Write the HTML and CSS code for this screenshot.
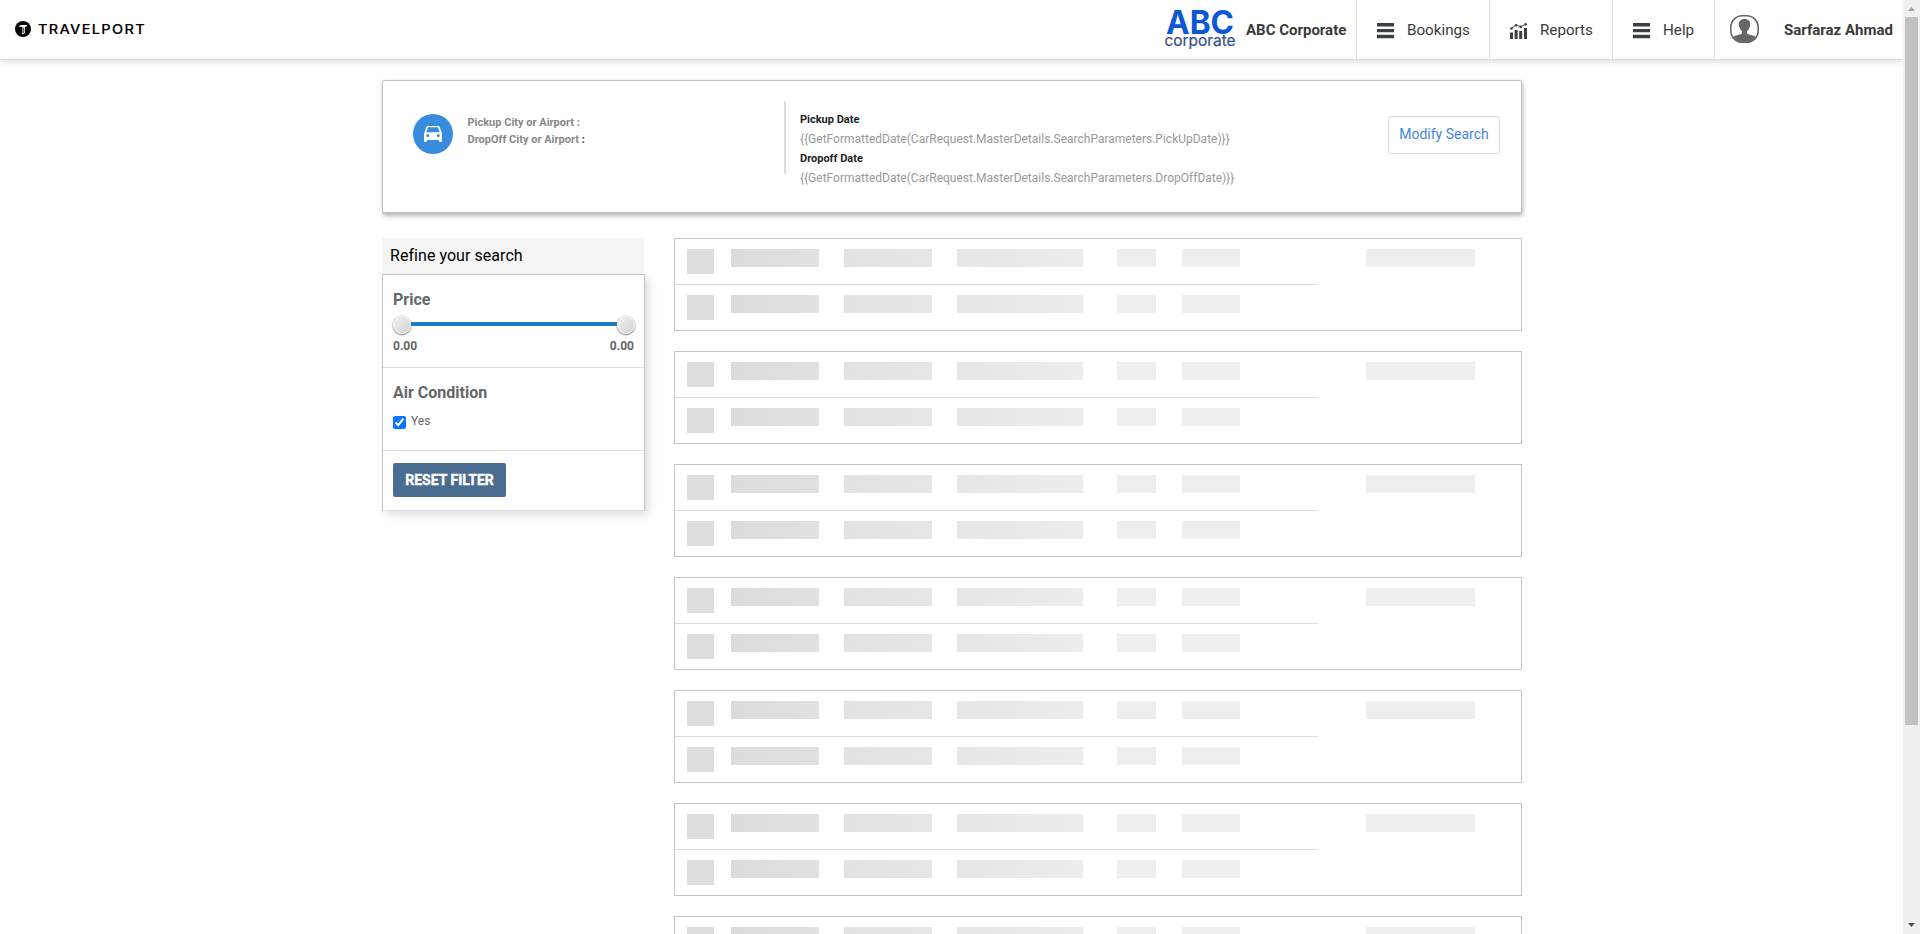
FILE: index.html
```
<!DOCTYPE html>
<html lang="en">
<head>
<meta charset="utf-8">
<title>Travelport - Car search</title>
<link rel="stylesheet" href="styles.css">
</head>
<body>
<div class="page">
  <header class="topbar">
    <div class="brand">
      <svg class="brand-mark" viewBox="0 0 16 16"><circle cx="8" cy="8" r="8" fill="#000"/><path d="M3.800 5.800Q4.500 4 6 4H12.300Q11.900 5.900 9.900 6L9.700 12.400L7.200 13.300V5.800Z" fill="#fff"/><path d="M8.200 6.500V12" stroke="#000" stroke-width=".9"/></svg>
      <svg class="brand-name" viewBox="0 0 108 18"><text x="0" y="13" textLength="108" lengthAdjust="spacingAndGlyphs">TRAVELPORT</text></svg>
    </div>
    <div class="agency">
      <svg class="agency-logo" viewBox="0 0 72 59"><text class="logo-abc" x="1" y="34" textLength="68" lengthAdjust="spacingAndGlyphs">ABC</text><text class="logo-corp" x="-.5" y="46" textLength="71" lengthAdjust="spacingAndGlyphs">corporate</text></svg>
      <span class="agency-name">ABC Corporate</span>
    </div>
    <nav class="menu">
      <a class="menu-item bookings"><svg class="icon" viewBox="0 0 17 16"><path d="M0 0h17v3.400H0zM0 5.900h17v3.400H0zM0 11.800h17v3.400H0z"/></svg><span>Bookings</span></a>
      <a class="menu-item reports"><svg class="icon" viewBox="0 0 17 17"><path d="M0 9.500h3v6.500h-3zM4.600 7h3v9h-3zM9.200 8h3v8h-3zM14 5h3v11h-3z"/><path d="M1.300 5.500L6 2L10.700 3.700L15.700 1.200" fill="none" stroke="#3a4145" stroke-width=".9"/><circle cx="1.400" cy="5.500" r="1.300"/><circle cx="6" cy="2.200" r="1.300"/><circle cx="10.700" cy="3.900" r="1.300"/><circle cx="15.600" cy="1.300" r="1.300"/></svg><span>Reports</span></a>
      <a class="menu-item help"><svg class="icon" viewBox="0 0 17 16"><path d="M0 0h17v3.400H0zM0 5.900h17v3.400H0zM0 11.800h17v3.400H0z"/></svg><span>Help</span></a>
      <a class="menu-item user"><svg class="avatar" viewBox="0 0 29 28"><rect x=".8" y=".8" width="27.400" height="26.400" rx="11.500" fill="#fff" stroke="#666" stroke-width="1.600"/><path d="M14.500 4C11 4 8.600 6.200 8.900 9.500C8.400 10.500 8.900 11.800 9.600 12.200C10 14 11 15.500 12 16.300V18C11 20 7 19.800 3.300 21.500Q6.500 27 14.500 27T25.700 21.500C22 19.800 18 20 17 18V16.300C18 15.500 19 14 19.400 12.200C20.100 11.800 20.600 10.500 20.100 9.500C20.400 6.200 18 4 14.500 4Z" fill="#666"/></svg><span class="user-name">Sarfaraz Ahmad</span></a>
    </nav>
  </header>

  <main class="content">
    <section class="summary">
      <div class="summary-icon"><svg viewBox="0 0 18 16"><path fill="#fff" fill-rule="evenodd" d="M4 0H14Q15.400 0 15.800 1.200L18 7.500V15Q18 16 17 16H16Q15 16 15 15V14H3V15Q3 16 2 16H1Q0 16 0 15V7.500L2.200 1.200Q2.600 0 4 0ZM4 1.300L2.300 6.200H15.700L14 1.300ZM3.700 8A1.500 1.500 0 1 0 3.700 11A1.500 1.500 0 1 0 3.700 8ZM14.300 8A1.500 1.500 0 1 0 14.300 11A1.500 1.500 0 1 0 14.300 8Z"/></svg></div>
      <div class="places">
        <p>Pickup City or Airport :</p>
        <p>DropOff City or Airport <span class="dark">:</span></p>
      </div>
      <div class="rule"></div>
      <dl class="dates">
        <dt>Pickup Date</dt>
        <dd>{{GetFormattedDate(CarRequest.MasterDetails.SearchParameters.PickUpDate)}}</dd>
        <dt>Dropoff Date</dt>
        <dd>{{GetFormattedDate(CarRequest.MasterDetails.SearchParameters.DropOffDate)}}</dd>
      </dl>
      <button class="modify">Modify Search</button>
    </section>

    <div class="columns">
      <aside class="filters">
        <h2 class="filters-title">Refine your search</h2>
        <div class="panel">
          <section class="group price">
            <h3>Price</h3>
            <div class="slider"><i class="knob"></i><i class="track"></i><i class="knob"></i></div>
            <div class="range"><span>0.00</span><span>0.00</span></div>
          </section>
          <section class="group air">
            <h3>Air Condition</h3>
            <label class="check"><input type="checkbox" checked><span>Yes</span></label>
          </section>
          <section class="group reset"><button class="reset-button">RESET FILTER</button></section>
        </div>
      </aside>
      <div class="results" id="results"></div>
    </div>
  </main>
</div>
<div class="scrollbar">
  <i class="arrow up"></i>
  <i class="thumb"></i>
  <i class="arrow down"></i>
</div>
<script src="skeleton.js"></script>
</body>
</html>
```
FILE: skeleton.js
```
// Placeholder cards shown while the car results load.
const row = '<div class="row"><i class="photo"></i><i class="tone-a"></i><i class="tone-b"></i><i class="tone-c"></i><i class="short"></i><i></i></div>';
const card = '<article class="card"><div class="rows">' + row + row + '</div><i class="total"></i></article>';
document.getElementById('results').innerHTML = card.repeat(7);
```
FILE: styles.css
```
* { box-sizing: border-box; }
body { margin: 0; height: 934px; display: flex; overflow: hidden; background: #fefefe; font-family: Roboto, sans-serif; color: #3a3a3a; }
p, h2, h3, dl, dd { margin: 0; }
button { font-family: inherit; }
svg { display: block; flex: none; }
.page { width: 1903px; height: 934px; overflow: hidden; }

.topbar { display: flex; height: 60px; background: #fff; border-bottom: 1px solid #dedede; box-shadow: 0 2px 5px rgba(0,0,0,.12); }
.brand { display: flex; align-items: flex-start; padding: 21px 0 0 15px; width: 1165px; }
.brand-mark { width: 16px; height: 16px; }
.brand-name { width: 108px; height: 18px; margin: 0 0 0 7px; }
.brand-name text { font: 500 13px Inter, sans-serif; letter-spacing: 1.2px; fill: #000; stroke: #000; stroke-width: .15; }
.agency { display: flex; width: 191px; }
.agency-logo { width: 72px; height: 59px; overflow: visible; }
.logo-abc { font: 700 32px Inter, sans-serif; fill: #0b57d5; }
.logo-corp { font: 400 15px Inter, sans-serif; fill: #344f86; stroke: #344f86; stroke-width: .2; }
.agency-name { margin-left: 9px; font-size: 15px; font-weight: 700; line-height: 60px; white-space: nowrap; }
.menu { display: flex; height: 59px; }
.menu-item { display: flex; border-left: 1px solid #e0e0e0; font-size: 15.200px; line-height: 60px; white-space: nowrap; padding-left: 20px; }
.icon { width: 17px; height: 16px; margin: 23px 13px 0 0; fill: #3a4145; }
.bookings { width: 133px; }
.reports { width: 123px; }
.reports .icon { height: 17px; }
.help { width: 102px; }
.user { width: 189px; padding-left: 15px; }
.avatar { width: 29px; height: 28px; margin: 15px 25px 0 0; }
.user-name { font-weight: 700; font-size: 15px; }

.content { width: 1140px; margin: 20px 0 0 382px; }
.summary { display: flex; height: 134px; background: #fff; border: 1px solid #c3c3c3; border-bottom-width: 2px; border-radius: 3px; box-shadow: 1px 2px 4px rgba(0,0,0,.28); padding-left: 30px; }
.summary-icon { width: 40px; height: 40px; border-radius: 50%; background: #388bdd; margin-top: 33px; padding: 12px 11px; }
.summary-icon svg { width: 18px; height: 16px; }
.places { width: 331px; padding: 33px 0 0 14.500px; font-size: 11px; font-weight: 700; line-height: 17px; color: #888; }
.dark { color: #333; }
.rule { width: 2px; height: 73px; margin-top: 20px; background: #dcdcdc; }
.dates { width: 602px; padding: 29px 0 0 14px; font-size: 12px; line-height: 19.500px; color: #999; }
.dates dt { font-size: 11px; font-weight: 700; color: #222; }
.modify { width: 112px; height: 38px; margin-top: 35px; padding: 0 0 2px; background: #fff; border: 1px solid #d5dde6; border-radius: 3px; font-size: 14px; color: #4286dc; }

.columns { display: flex; justify-content: space-between; margin-top: 24px; }
.filters { width: 263px; }
.filters-title { width: 262px; height: 36px; padding-left: 8px; background: #f5f5f5; font-size: 16px; font-weight: 400; letter-spacing: .05px; line-height: 36px; color: #000; }
.panel { height: 237px; background: #fff; border: 1px solid #c3c3c3; box-shadow: 4px 4px 8px rgba(0,0,0,.12); color: #666; }
.group { padding: 0 10px; border-bottom: 1px solid #e0e0e0; }
.group h3 { font-size: 16px; font-weight: 700; line-height: 20px; }
.price { height: 93px; padding-top: 15px; }
.slider { display: flex; align-items: center; width: 242px; height: 18px; margin-top: 6px; }
.knob { width: 18px; height: 18px; border-radius: 50%; border: 1px solid #f8f8f8; background: linear-gradient(135deg, #f3f3f3, #d0d0d0); box-shadow: 0 0 1px #777, 0 1px 2px #777; }
.track { flex: 1; height: 4px; background: #1f7cc0; margin-top: -2px; }
.range { display: flex; justify-content: space-between; width: 241px; margin-top: 4px; font-size: 12px; font-weight: 700; line-height: 17px; }
.air { height: 83px; padding-top: 15px; }
.check { display: flex; margin-top: 11px; font-size: 12px; line-height: 14px; }
.check input { width: 13px; height: 13px; margin: 2px 5px 0 0; accent-color: #0a75ff; }
.reset { height: 60px; padding-top: 12px; }
.reset-button { display: block; width: 113px; height: 34px; padding: 0 0 1px; border: 0; border-radius: 2px; background: #4b6c91; color: #fff; font-size: 14px; font-weight: 700; -webkit-text-stroke: .4px #fff; white-space: nowrap; }

.results { display: flex; flex-direction: column; gap: 20px; width: 848px; }
.card { display: flex; height: 93px; background: #fff; border: 1px solid #c5c5c5; }
.rows { width: 643px; height: 91px; }
.row { display: grid; grid-template-columns: 44px 113px 113px 160px 65px 58px; height: 46px; padding: 10px 0 0 12px; }
.row:first-child { border-bottom: 1px solid #dcdbe3; }
.row i { height: 18px; background: #eee; }
.row .photo { width: 27px; height: 25px; background: #dedede; }
.row .tone-a { width: 88px; background: linear-gradient(90deg, #dcdcdc, #e1e1e1); }
.row .tone-b { width: 88px; background: linear-gradient(90deg, #e2e2e2, #e6e6e6); }
.row .tone-c { width: 126px; background: linear-gradient(90deg, #e6e6e6, #ededed); }
.row .short { width: 39px; }
.total { width: 109px; height: 18px; margin: 10px 0 0 48px; background: #eee; }

.scrollbar { display: flex; flex-direction: column; align-items: center; width: 17px; height: 934px; background: #f0f0f0; }
.arrow { width: 7px; height: 4px; }
.up { margin: 7px 0 6px; background: #a3a3a3; clip-path: polygon(50% 0, 100% 100%, 0 100%); }
.thumb { width: 13px; height: 708px; background: #c1c1c1; }
.down { margin-top: 198px; background: #505050; clip-path: polygon(0 0, 100% 0, 50% 100%); }
```
